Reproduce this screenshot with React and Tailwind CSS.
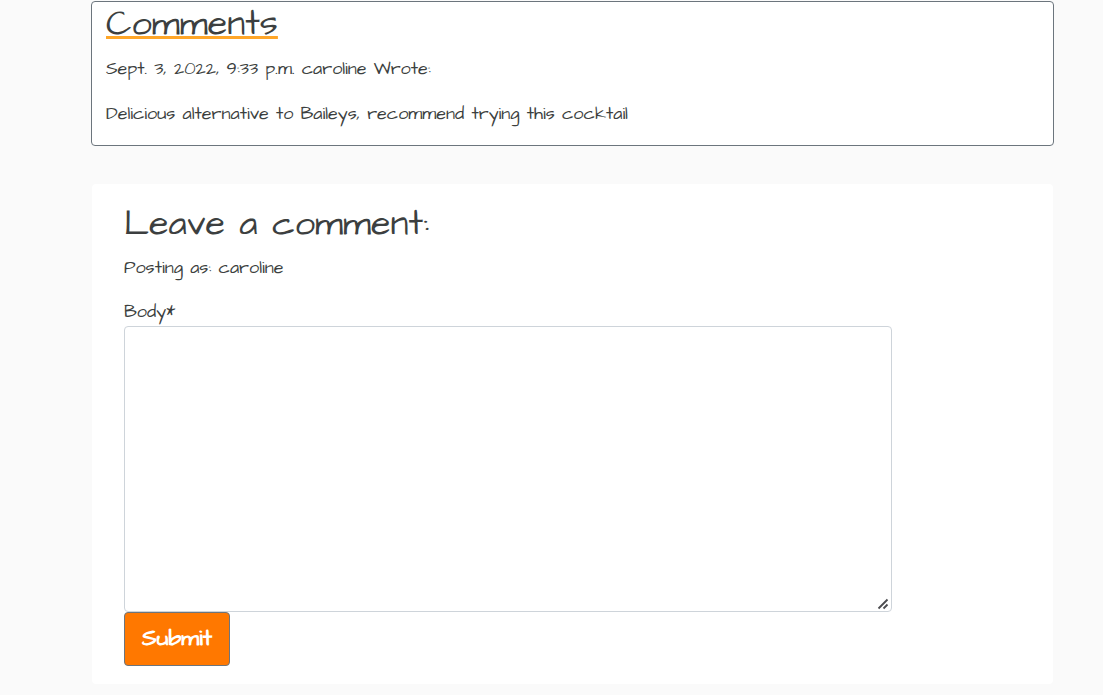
export default function App() {
  return (
    <div className="flow-root min-h-screen bg-[#fafafa] pr-[49px] pl-[91px] font-['Architects_Daughter','Lato',sans-serif] text-lg leading-[29px] text-[#3c3f40]">
      <section className="mt-px rounded border border-[#6c757d] bg-white px-3.5 pb-[17px]">
        <h2 className="text-4xl leading-[44px] underline decoration-[#ffa628] decoration-[3px] underline-offset-2">Comments</h2>
        <p className="mt-2 mb-4">Sept. 3, 2022, 9:33 p.m. caroline Wrote:</p>
        <p>Delicious alternative to Baileys, recommend trying this cocktail</p>
      </section>
      <section className="mx-px mt-[38px] rounded bg-white px-8 pt-[17px] pb-[18px]">
        <h2 className="text-4xl leading-[46px]">Leave a comment:</h2>
        <p className="mt-1.5 mb-4">Posting as: caroline</p>
        <form>
          <label htmlFor="body" className="block leading-7">Body*</label>
          <div className="relative w-fit max-w-full">
            <textarea
              id="body"
              name="body"
              required
              className="block h-[286px] w-[768px] max-w-full rounded border border-[#ced4da] bg-white px-3 py-1.5 [&::-webkit-resizer]:bg-transparent"
            />
            <svg aria-hidden="true" viewBox="0 0 12 12" className="pointer-events-none absolute right-[3px] bottom-[2px] h-3 w-3" fill="none" stroke="#4c4c50" strokeWidth="1.8">
              <path d="M1.5 10.5 L10.5 1.5 M6.5 10.5 L10.5 6.5" />
            </svg>
          </div>
          <button type="submit" className="block h-[54px] rounded border border-[#6c757d] bg-[#ff7800] px-[17px] pb-0.5 text-[23px] font-bold text-white">Submit</button>
        </form>
      </section>
    </div>
  );
}
